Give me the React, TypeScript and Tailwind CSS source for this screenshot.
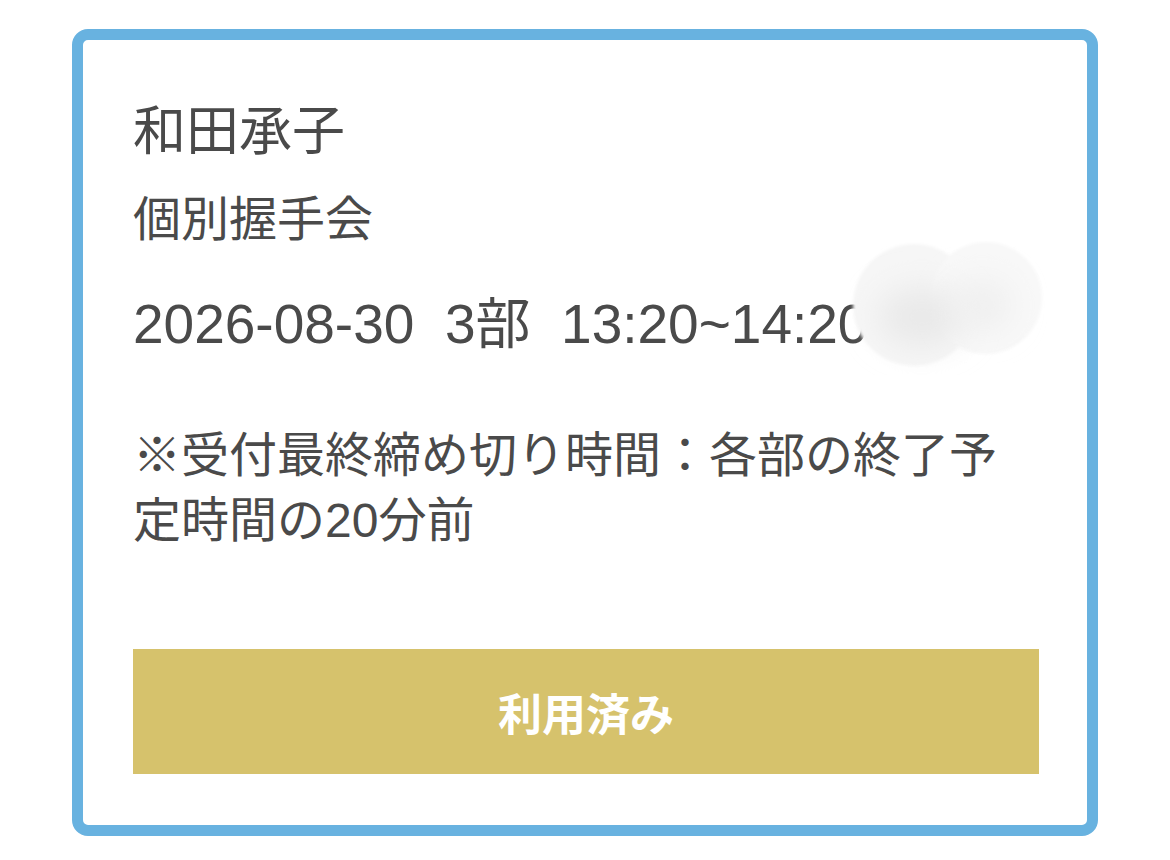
import React from "react";

function Smudge() {
  // soft blurred patch sitting over the end of the time range
  return (
    <svg
      className="pointer-events-none absolute left-[767px] top-[201px]"
      width="204"
      height="134"
      viewBox="0 0 204 134"
    >
      <defs>
        <filter id="soft-edge" x="-10%" y="-10%" width="120%" height="120%">
          <feGaussianBlur stdDeviation="1.6" />
        </filter>
        <filter id="soft-core" x="-60%" y="-60%" width="220%" height="220%">
          <feGaussianBlur stdDeviation="16" />
        </filter>
      </defs>
      <g filter="url(#soft-edge)">
        <circle cx="64" cy="64" r="61" fill="#f6f6f6" />
        <circle cx="136" cy="57" r="56" fill="#f8f8f8" />
      </g>
      <ellipse cx="72" cy="76" rx="44" ry="30" fill="#e9e9e9" filter="url(#soft-core)" />
      <ellipse cx="132" cy="64" rx="30" ry="26" fill="#efefef" filter="url(#soft-core)" />
    </svg>
  );
}

export default function App() {
  return (
    <div className="min-h-[860px] w-[1170px] bg-white pl-[72px] pt-[29px]">
      <div className="relative flex h-[807px] w-[1026px] flex-col rounded-[16px] border-[11px] border-[#68b2e0] bg-white px-[50px] pt-[55px] font-[family-name:'Noto_Sans_CJK_JP','Noto_Sans',sans-serif] text-[#4a4a4a]">
        <div className="text-[53px] leading-[64px]">和田承子</div>
        <div className="mt-[26px] text-[48px] leading-[60px]">個別握手会</div>
        <div className="mt-[47px] whitespace-pre font-[family-name:'Liberation_Sans','Noto_Sans_CJK_JP',sans-serif] text-[55px] leading-[64px]">
          {"2026-08-30  3部  13:20~14:20"}
        </div>
        <div className="mt-[67px] pr-[40px] font-[family-name:'Liberation_Sans','Noto_Sans_CJK_JP',sans-serif] text-[48px] leading-[65px]">
          ※受付最終締め切り時間：各部の終了予定時間の20分前
        </div>
        <button
          type="button"
          className="mt-[96px] flex h-[125px] w-[906px] items-center justify-center bg-[#d6c26c] text-[44px] font-bold text-white"
        >
          利用済み
        </button>
        <Smudge />
      </div>
    </div>
  );
}
